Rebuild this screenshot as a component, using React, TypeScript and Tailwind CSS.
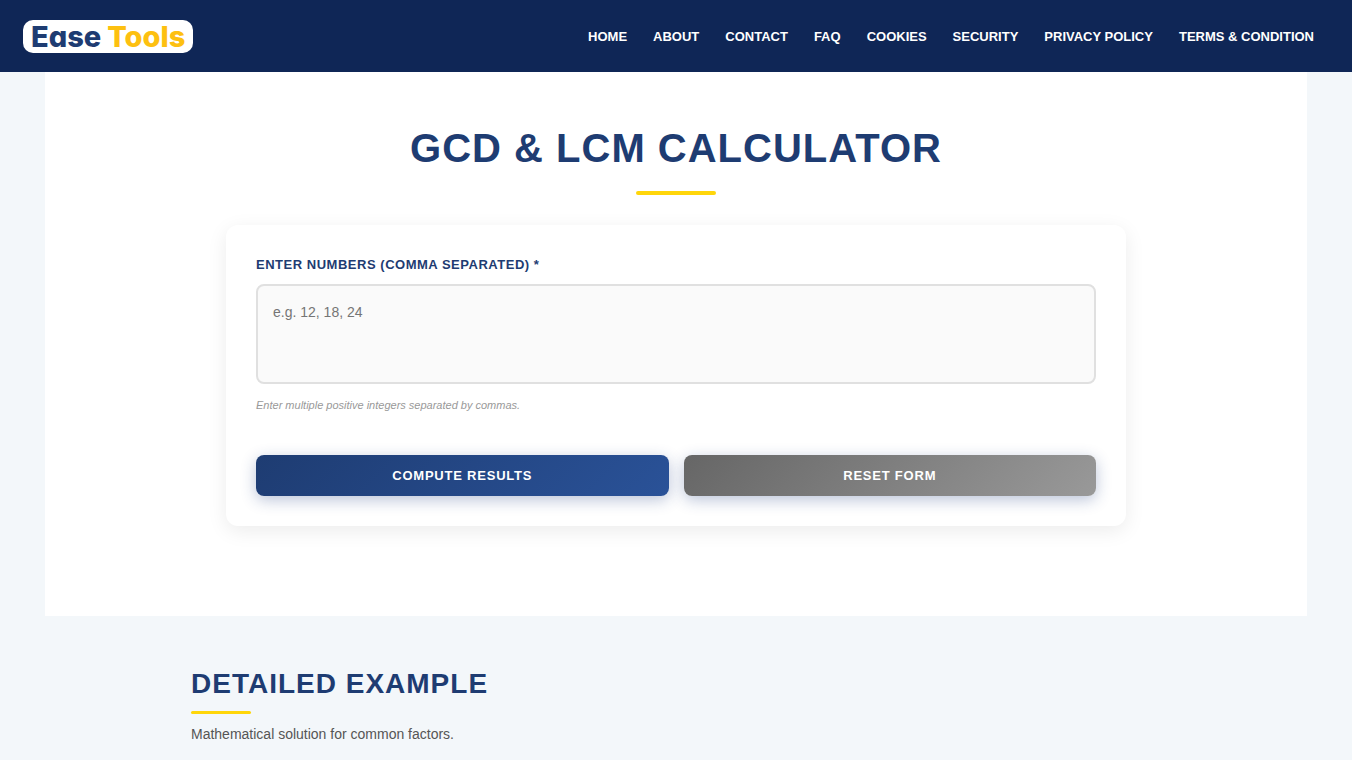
import { useState } from "react";

const NAV_LINKS = [
  { label: "Home", href: "#home" },
  { label: "About", href: "#about" },
  { label: "Contact", href: "#contact" },
  { label: "FAQ", href: "#faq" },
  { label: "Cookies", href: "#cookies" },
  { label: "Security", href: "#security" },
  { label: "Privacy Policy", href: "#privacy" },
  { label: "Terms & Condition", href: "#terms" },
];

const BUTTON =
  "flex-1 rounded-lg py-3 text-[13px] leading-[17px] font-bold uppercase tracking-[0.06em] text-white shadow-[0_4px_15px_rgba(30,60,130,0.3)] cursor-pointer";

function Logo() {
  return (
    <a
      href="#home"
      className="flex items-center gap-1.5 rounded-[10px] bg-white px-2 font-['Inter',sans-serif] text-[29px] leading-[33px] font-extrabold [font-feature-settings:'cv11']"
    >
      <span className="text-[#1e3c72]">Ease</span>
      <span className="text-[#fdc010]">Tools</span>
    </a>
  );
}

function Header() {
  return (
    <header className="flex h-[72px] items-center justify-between bg-[#0f2656] pl-[23px] pr-[38px]">
      <Logo />
      <nav className="flex gap-[26px] pt-0.5">
        {NAV_LINKS.map((l) => (
          <a
            key={l.href}
            href={l.href}
            className="text-[13px] leading-5 font-bold uppercase whitespace-nowrap text-white"
          >
            {l.label}
          </a>
        ))}
      </nav>
    </header>
  );
}

function CalculatorForm() {
  const [numbers, setNumbers] = useState("");

  return (
    <form
      className="mx-auto max-w-[900px] rounded-xl bg-white p-[30px] shadow-[0_5px_20px_rgba(0,0,0,0.08)]"
      onSubmit={(e) => e.preventDefault()}
      onReset={() => setNumbers("")}
    >
      <label
        htmlFor="numbers"
        className="block text-[13px] leading-5 font-bold uppercase tracking-[0.04em] text-[#1e3c72]"
      >
        Enter numbers (comma separated) *
      </label>
      <textarea
        id="numbers"
        value={numbers}
        onChange={(e) => setNumbers(e.target.value)}
        placeholder="e.g. 12, 18, 24"
        aria-describedby="numbers-hint"
        className="mt-[9px] block h-[100px] w-full resize-none rounded-lg border-2 border-[#e0e0e0] bg-[#fafafa] p-[15px] text-sm leading-[22px] text-[#333] placeholder:text-[#757575] outline-none focus:border-[#1e3c72]"
      />
      <p id="numbers-hint" className="mt-3 text-[11px] leading-[18px] italic text-[#999]">
        Enter multiple positive integers separated by commas.
      </p>
      <div className="mt-[41px] flex gap-[15px]">
        <button type="submit" className={`${BUTTON} bg-[linear-gradient(135deg,#1e3c72,#2a5298)]`}>
          Compute Results
        </button>
        <button type="reset" className={`${BUTTON} bg-[linear-gradient(135deg,#666,#999)]`}>
          Reset Form
        </button>
      </div>
    </form>
  );
}

export default function App() {
  return (
    <div className="min-h-screen bg-[#f3f7fa] font-['Liberation_Sans',Arial,sans-serif]">
      <Header />

      <main className="mx-[45px] bg-white px-5 pt-[50px] pb-[90px]">
        <h1 className="text-center text-[40px] leading-[52px] font-bold uppercase tracking-wide text-[#1e3c72]">
          GCD &amp; LCM Calculator
        </h1>
        <div className="mx-auto mt-[17px] mb-[30px] h-1 w-20 rounded-sm bg-[#ffd60a]" />
        <CalculatorForm />
      </main>

      {/* Worked example */}
      <section className="mx-auto max-w-[970px] pt-[50px]">
        <h2 className="text-[28px] leading-9 font-bold uppercase tracking-[1px] text-[#1e3c72]">
          Detailed Example
        </h2>
        <div className="mt-[9px] h-[3px] w-[60px] rounded-sm bg-[#ffd60a]" />
        <p className="mt-[9px] text-sm leading-[22px] text-[#555]">
          Mathematical solution for common factors.
        </p>
      </section>
    </div>
  );
}
